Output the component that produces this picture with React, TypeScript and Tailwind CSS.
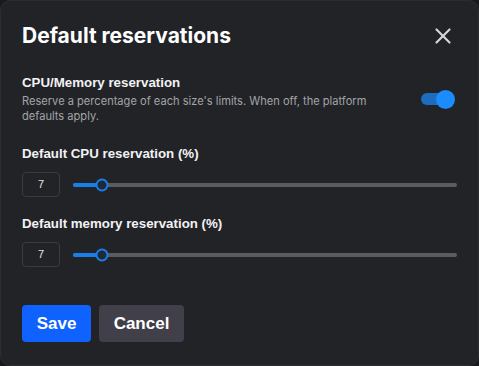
import { X } from "lucide-react";

function Slider({ value }: { value: number }) {
  return (
    <div className="relative h-[4px] flex-1 rounded-full bg-[#5b5b61]">
      <div className="absolute left-0 top-0 h-full rounded-full bg-[#1a7fe8]" style={{ width: `calc(${value}% + 2px)` }} />
      <div
        className="absolute top-1/2 h-[13px] w-[13px] -translate-x-1/2 -translate-y-1/2 rounded-full border-[2.5px] border-[#1a7fe8] bg-[#1f2a38]"
        style={{ left: `calc(${value}% + 2px)` }}
      />
    </div>
  );
}

function SliderField({ label, value }: { label: string; value: number }) {
  return (
    <div className="flex flex-col">
      <div className="text-[13.3px] font-bold leading-[18px] text-[#f2f2f4]">{label}</div>
      <div className="mt-[9px] flex items-center gap-[13px]">
        <div className="flex h-[25px] w-[38px] items-center justify-center rounded-[4px] border border-[#3b3b41] text-[11px] text-[#e4e4e7]">
          {value}
        </div>
        <Slider value={value} />
      </div>
    </div>
  );
}

export default function App() {
  return (
    <div className="h-[366px] w-[479px] bg-[#19191c] font-['Liberation_Sans',Arial,sans-serif]">
      <div className="flex h-full flex-col rounded-[10px] border border-[#2c2c31] bg-[#222327] pl-[21px] pr-[21px] pt-[21px]">
        <div className="flex items-center justify-between">
          <h1 className="font-['Inter',sans-serif] text-[21px] font-bold leading-[28px] text-white">
            Default reservations
          </h1>
          <X size={26} strokeWidth={2} className="mr-[1px] text-[#d4d4d8]" />
        </div>

        <div className="mt-[24px] flex items-center justify-between">
          <div className="w-[362px]">
            <div className="text-[13.3px] font-bold leading-[18px] text-[#f2f2f4]">CPU/Memory reservation</div>
            <p className="mt-[2px] font-['Inter',sans-serif] text-[11.1px] leading-[15px] text-[#a3a3aa]">
              Reserve a percentage of each size's limits. When off, the platform defaults apply.
            </p>
          </div>
          <div className="relative mr-[2px] flex h-[19px] w-[34px] items-center">
            <div className="h-[12px] w-[30px] rounded-full bg-[#1d6cc0]" />
            <div className="absolute right-0 top-0 h-[19px] w-[19px] rounded-full bg-[#1a8cff]" />
          </div>
        </div>

        <div className="mt-[21px] flex flex-col gap-[18px]">
          <SliderField label="Default CPU reservation (%)" value={7} />
          <SliderField label="Default memory reservation (%)" value={7} />
        </div>

        <div className="mt-[38px] flex gap-[8px]">
          <button className="h-[37px] w-[69px] rounded-[4px] bg-[#0f62fe] text-[17px] font-bold text-white">Save</button>
          <button className="h-[37px] w-[85px] rounded-[4px] bg-[#403f4a] text-[17px] font-bold text-white">Cancel</button>
        </div>
      </div>
    </div>
  );
}
